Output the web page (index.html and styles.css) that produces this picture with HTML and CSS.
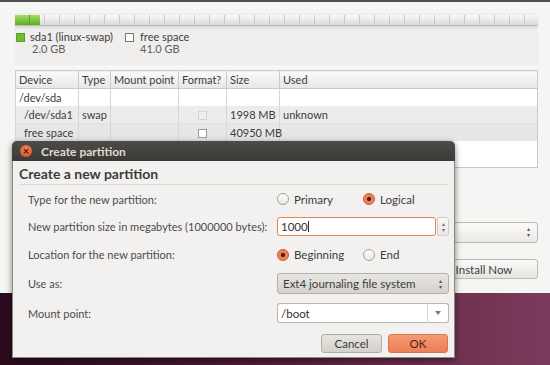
FILE: index.html
```html
<!DOCTYPE html>
<html>
	<head>
		<title>Create partition</title>
		<link rel="stylesheet" href="styles.css">
	</head>
	<body>
		<div class="window">
			<div class="disk">
				<div class="bar"><div class="bar-used"></div></div>
				<div class="legend">
					<div class="legend-item first">
						<span class="swatch swap"></span>
						<div>
							<div class="legend-name">sda1 (linux-swap)</div>
							<div class="legend-size">2.0 GB</div>
						</div>
					</div>
					<div class="legend-item">
						<span class="swatch free"></span>
						<div>
							<div class="legend-name">free space</div>
							<div class="legend-size free-size">41.0 GB</div>
						</div>
					</div>
				</div>
			</div>
			<table class="parts">
				<colgroup>
					<col class="c-dev"><col class="c-type"><col class="c-mount"><col class="c-fmt"><col class="c-size"><col>
				</colgroup>
				<tr>
					<th>Device</th>
					<th>Type</th>
					<th>Mount point</th>
					<th>Format?</th>
					<th>Size</th>
					<th>Used</th>
				</tr>
				<tr class="r-disk">
					<td>/dev/sda</td><td></td><td></td><td></td><td></td><td></td>
				</tr>
				<tr class="r-part">
					<td class="indent">/dev/sda1</td><td>swap</td><td></td>
					<td class="fmt"><span class="check off"></span></td>
					<td>1998 MB</td><td>unknown</td>
				</tr>
				<tr class="r-sel">
					<td class="indent">free space</td><td></td><td></td>
					<td class="fmt"><span class="check"></span></td>
					<td>40950 MB</td><td></td>
				</tr>
				<tr class="r-fill">
					<td></td><td></td><td></td><td></td><td></td><td></td>
				</tr>
			</table>
			<div class="actions">
				<div class="bg-combo"><span class="updown">&#9652;<br>&#9662;</span></div>
				<button class="bg-btn">Install Now</button>
			</div>
		</div>

		<div class="dialog">
			<div class="titlebar">
				<span class="close">&#215;</span>
				<span class="title">Create partition</span>
			</div>
			<div class="dlg-body">
				<h2>Create a new partition</h2>
				<div class="form">
					<label>Type for the new partition:</label>
					<div class="radios">
						<span class="opt"><span class="radio"></span>Primary</span>
						<span class="opt"><span class="radio on"></span>Logical</span>
					</div>

					<label>New partition size in megabytes (1000000 bytes):</label>
					<div class="spin">
						<div class="entry focus">1000<span class="caret"></span></div>
						<div class="spin-btn"><span>&#9652;</span><span>&#9662;</span></div>
					</div>

					<label>Location for the new partition:</label>
					<div class="radios">
						<span class="opt"><span class="radio on"></span>Beginning</span>
						<span class="opt"><span class="radio"></span>End</span>
					</div>

					<label>Use as:</label>
					<div class="combo">Ext4 journaling file system<span class="updown">&#9652;<br>&#9662;</span></div>

					<label>Mount point:</label>
					<div class="combo-entry">
						<div class="entry">/boot</div>
						<div class="drop"><span></span></div>
					</div>
				</div>
				<div class="buttons">
					<button class="btn">Cancel</button>
					<button class="btn ok">OK</button>
				</div>
			</div>
		</div>
	</body>
</html>
```

FILE: styles.css
```css
body{
	margin: 0;
	width: 550px;
	height: 365px;
	overflow: hidden;
	position: relative;
	font-family: Lato, "Open Sans", sans-serif;
	font-size: 11px;
	color: #3c3c3c;
	background: linear-gradient(to right, #2a0b1d 0%, #44162f 35%, #6a2d4c 75%, #7c3b5c 100%);
}

/* installer window behind the dialog */
.window{
	height: 293px;
	box-sizing: border-box;
	background: #f5f5f4;
	border-top: 2px solid #4f4f4f;
	padding: 11px 12px 0 15px;
}
.disk{
	background: #efeeed;
	height: 52px;
	box-sizing: border-box;
	padding-top: 2px;
}
.bar{
	height: 10px;
	background: repeating-linear-gradient(to right, transparent 0 14px, #cacaca 14px 15px), linear-gradient(#f8f8f8, #dadada);
	border-bottom: 1px solid #b9b9b9;
	box-shadow: 0 2px 2px rgba(0,0,0,0.08);
}
.bar-used{
	width: 25px;
	height: 100%;
	background: repeating-linear-gradient(to right, transparent 0 14px, #5a9e2a 14px 15px), linear-gradient(#a2dc66, #5fae24);
}
.legend{
	display: flex;
	margin-top: 5px;
	padding-left: 1px;
}
.legend-item{
	display: flex;
	gap: 5px;
}
.legend-item.first{
	width: 109px;
}
.swatch{
	width: 7px;
	height: 7px;
	margin-top: 2px;
	border: 1px solid #5b9a26;
	background: #6cc02e;
}
.swatch.free{
	border-color: #777;
	background: #fff;
	margin-right: 1px;
}
.legend-name, .legend-size{
	line-height: 12px;
	font-size: 11px;
}
.legend-size{
	color: #5e5e5e;
	padding-left: 2px;
}
.free-size{
	padding-left: 0;
}

.parts{
	margin-top: 5px;
	width: 523px;
	table-layout: fixed;
	border-collapse: collapse;
	border: 1px solid #c8c8c8;
	background: #fff;
	font-size: 11px;
}
.c-dev{ width: 63px; }
.c-type{ width: 32px; }
.c-mount{ width: 68px; }
.c-fmt{ width: 48px; }
.c-size{ width: 53px; }
.parts th, .parts td{
	padding: 0 0 0 3px;
	text-align: left;
	font-weight: normal;
	border-left: 1px solid #d6d6d6;
	white-space: nowrap;
}
.parts th{
	height: 17px;
	background: linear-gradient(#fafafa, #e6e6e6);
	border: 1px solid #cacaca;
}
.parts td{
	height: 17px;
}
.r-part td{
	background: #ececec;
	border-bottom: 1px solid #e0e0e0;
}
.r-sel td{
	background: #e6e6e6;
}
.r-fill td{
	height: 26px;
}
.indent{
	padding-left: 8px !important;
}
.fmt{
	text-align: center !important;
	padding: 0 !important;
}
.check{
	display: inline-block;
	width: 7px;
	height: 7px;
	border: 1px solid #9a9a9a;
	background: #fff;
	vertical-align: -1px;
}
.check.off{
	border-color: #d4d4d4;
	background: #efefef;
}

.actions{
	display: flex;
	flex-direction: column;
	align-items: flex-end;
	margin-top: 54px;
	gap: 16px;
}
.bg-combo{
	width: 150px;
	height: 19px;
	border: 1px solid #bdbab4;
	border-radius: 3px;
	background: linear-gradient(#fbfbfa, #eceae7);
	position: relative;
}
.bg-btn{
	width: 108px;
	height: 20px;
	border: 1px solid #bdbab4;
	border-radius: 3px;
	background: linear-gradient(#fafaf9, #e6e4e0);
	font-family: inherit;
	font-size: 11.5px;
	color: #3c3c3c;
	padding: 0;
}
.updown{
	position: absolute;
	right: 7px;
	top: 3px;
	font-size: 6px;
	line-height: 6px;
	color: #555;
}

/* dialog on top */
.dialog{
	position: absolute;
	left: 12px;
	top: 141px;
	width: 443px;
	height: 217px;
	box-sizing: border-box;
	background: #f2f1f0;
	border: 1px solid #8d8a85;
	border-top: none;
	border-radius: 5px 5px 0 0;
	box-shadow: 0 2px 6px rgba(0,0,0,0.5);
}
.titlebar{
	height: 20px;
	margin: 0 -1px;
	border-radius: 5px 5px 0 0;
	background: linear-gradient(#4d4c47, #3a3935);
	display: flex;
	align-items: center;
	padding-left: 8px;
	gap: 9px;
}
.close{
	width: 12px;
	height: 12px;
	border-radius: 50%;
	background: radial-gradient(circle at 50% 35%, #f8845a, #d9481f);
	color: #3b1a10;
	font-size: 11px;
	line-height: 11px;
	text-align: center;
	font-weight: bold;
}
.title{
	color: #dfdbd2;
	font-weight: bold;
	font-size: 12px;
}
.dlg-body{
	padding: 0 6px;
}
.dlg-body h2{
	margin: 0;
	height: 23px;
	line-height: 26px;
	font-size: 14px;
	font-weight: bold;
	color: #3c3c3c;
	border-bottom: 1px solid #dbd8d3;
}
.form{
	display: grid;
	grid-template-columns: 249px 172px;
	grid-template-rows: 18px 19px 19px 21px 20px;
	row-gap: 9px;
	align-items: center;
	padding-left: 9px;
	margin-top: 5px;
}
.form label{
	color: #4c4c4c;
}
.radios{
	display: flex;
}
.opt{
	width: 97px;
	display: flex;
	align-items: center;
	gap: 5px;
	font-size: 11.5px;
}
.radio{
	width: 10px;
	height: 10px;
	border-radius: 50%;
	border: 1px solid #a4a19c;
	background: linear-gradient(#ffffff, #e9e7e4);
}
.radio.on{
	border-color: #c85a32;
	background: radial-gradient(circle, #4a2218 0 1.6px, #ec7a4e 2.4px, #f08a60 100%);
}
.spin, .combo-entry{
	display: flex;
	height: 100%;
}
.entry{
	flex: 1;
	background: #fff;
	border: 1px solid #b9b6b0;
	border-radius: 3px;
	padding-left: 3px;
	display: flex;
	align-items: center;
	font-size: 11.5px;
	color: #333;
}
.entry.focus{
	border-color: #e9804f;
}
.caret{
	width: 1px;
	height: 11px;
	background: #333;
}
.spin-btn{
	width: 10px;
	margin-left: 1px;
	border: 1px solid #d0cdc8;
	border-radius: 0 3px 3px 0;
	background: linear-gradient(#f8f8f7, #ebe9e6);
	display: flex;
	flex-direction: column;
	align-items: center;
	justify-content: center;
	font-size: 6px;
	line-height: 6px;
	color: #777;
}
.combo{
	height: 100%;
	box-sizing: border-box;
	border: 1px solid #b4b1ab;
	border-radius: 3px;
	background: linear-gradient(#e8e6e2, #d5d2cd);
	padding-left: 5px;
	display: flex;
	align-items: center;
	font-size: 11.5px;
	position: relative;
}
.combo .updown{
	top: 4px;
	right: 6px;
}
.combo-entry .entry{
	border-radius: 3px 0 0 3px;
	border-right: none;
}
.drop{
	width: 20px;
	border: 1px solid #b9b6b0;
	border-left: 1px solid #d8d5d0;
	border-radius: 0 3px 3px 0;
	background: #fff;
	display: flex;
	align-items: center;
	justify-content: center;
}
.drop span{
	border-left: 3px solid transparent;
	border-right: 3px solid transparent;
	border-top: 4px solid #777;
}
.buttons{
	display: flex;
	justify-content: flex-end;
	gap: 6px;
	margin-top: 11px;
}
.btn{
	width: 61px;
	height: 19px;
	padding: 0;
	border: 1px solid #b1aea8;
	border-radius: 3px;
	background: linear-gradient(#e6e4e0, #d4d1cc);
	font-family: inherit;
	font-size: 11.5px;
	color: #3c3c3c;
}
.btn.ok{
	width: 60px;
	border-color: #d9764f;
	background: linear-gradient(#f49a73, #ec7f55);
	color: #4a2618;
}
```
